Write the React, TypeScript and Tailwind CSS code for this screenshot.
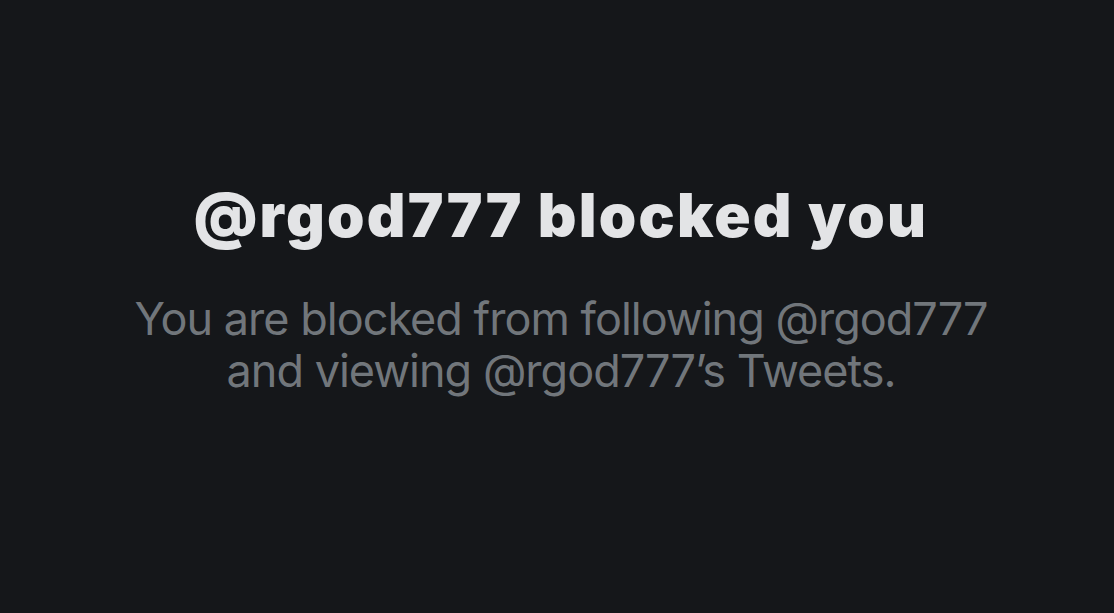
export default function App() {
  return (
    <div className="flex h-[613px] w-full flex-col items-center bg-[#15171a] pl-[8px] pt-[179px] font-['Inter',sans-serif] text-center">
      <h1 className="text-[60px] font-black leading-[72px] tracking-[0.037em] text-[#e3e4e6]">
        @rgod777 blocked you
      </h1>
      <p className="mt-[42px] text-[45px] leading-[52px] tracking-[-0.022em] text-[#71767b]">
        You are blocked from following @rgod777
        <br />
        and viewing @rgod777’s Tweets.
      </p>
    </div>
  );
}
